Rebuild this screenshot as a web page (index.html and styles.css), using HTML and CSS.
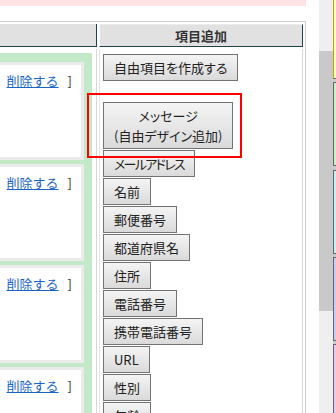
FILE: index.html
```html
<!DOCTYPE html>
<html lang="ja">
<head>
<meta charset="utf-8">
<title>項目追加</title>
<link rel="stylesheet" href="styles.css">
</head>
<body>
<div class="screen">
  <div class="frame">
    <div class="page">
      <div class="pinkbar"></div>
      <div class="table">
        <div class="th th-left"></div>
        <div class="th th-right">項目追加</div>
        <div class="td td-left">
          <div class="panel">
            <div class="item"><div class="del"><a href="#">削除する</a><span class="brk">]</span></div></div>
            <div class="item"><div class="del"><a href="#">削除する</a><span class="brk">]</span></div></div>
            <div class="item"><div class="del"><a href="#">削除する</a><span class="brk">]</span></div></div>
            <div class="item"><div class="del"><a href="#">削除する</a><span class="brk">]</span></div></div>
          </div>
        </div>
        <div class="td td-right">
          <div class="btns">
            <button class="btn btn-first" type="button">自由項目を作成する</button>
            <button class="btn" type="button">メッセージ<br>(自由デザイン追加)</button>
            <button class="btn btn-kana" type="button">メールアドレス</button>
            <button class="btn" type="button">名前</button>
            <button class="btn" type="button">郵便番号</button>
            <button class="btn" type="button">都道府県名</button>
            <button class="btn" type="button">住所</button>
            <button class="btn" type="button">電話番号</button>
            <button class="btn" type="button">携帯電話番号</button>
            <button class="btn" type="button">URL</button>
            <button class="btn" type="button">性別</button>
            <button class="btn" type="button">年齢</button>
          </div>
        </div>
      </div>
      <div class="highlight"></div>
    </div>
    <div class="scrollbar"><div class="thumb"></div></div>
  </div>
  <div class="side">
    <div class="sp sp-yellow"></div>
    <div class="sp sp-green"></div>
    <div class="sp sp-cyan"></div>
    <div class="sp sp-purple"></div>
    <div class="sp sp-pink"></div>
  </div>
</div>
</body>
</html>
```
FILE: styles.css
```css
html, body {
  margin: 0;
  padding: 0;
  background: #fff;
}
body {
  font-family: "Noto Sans CJK JP", "Noto Sans", sans-serif;
  font-size: 13px;
  color: #222;
  overflow: hidden;
}
.screen {
  display: flex;
  width: 336px;
  height: 413px;
  overflow: hidden;
}
.frame {
  display: flex;
  flex: none;
  width: 333px;
  height: 413px;
}
.page {
  position: relative;
  width: 319px;
  flex: none;
  height: 413px;
  overflow: hidden;
}
.pinkbar {
  width: 306px;
  height: 6px;
  background: #fde3e3;
}
.table {
  margin-top: 15px;
  width: 306px;
  box-sizing: border-box;
  border-top: 1px solid #cfcfcf;
  border-right: 1px solid #cfcfcf;
  padding: 2px 2px 0 0;
  display: grid;
  grid-template-columns: 97px 204px;
  column-gap: 2px;
  row-gap: 2px;
}
.th {
  height: 23px;
  box-sizing: border-box;
  background: #e1e1e1;
  border-right: 1px solid #1d434c;
  border-bottom: 1px solid #1d434c;
  font-weight: bold;
  line-height: 22px;
  text-align: center;
  color: #333;
  white-space: nowrap;
  overflow: hidden;
}
.th-right {
  border-left: 1px solid #fafafa;
  border-top: 1px solid #ececec;
  line-height: 21px;
}
.td-left {
  border-right: 1px solid #d6d6d6;
  padding: 4px 4px 0 0;
  height: 400px;
}
.panel {
  margin-left: -40px;
  background: #c3e9c9;
  padding: 9px 8px 0 8px;
}
.item {
  border: 3px solid #ebebeb;
  background: #fff;
  height: 91.7px;
  margin-bottom: 4px;
}
.del {
  padding: 6px 9px 0 0;
  line-height: 20px;
  text-align: right;
  color: #333;
  white-space: nowrap;
}
.del a {
  color: #1a64c8;
  text-decoration: underline;
}
.brk {
  margin-left: 9px;
}
.td-right {
  border-left: 1px solid #e4e4e4;
  border-right: 1px solid #d6d6d6;
  padding: 5px 0 0 3px;
  height: 400px;
}
.btns {
  display: flex;
  flex-direction: column;
  align-items: flex-start;
  gap: 1px;
}
.btn {
  font-family: "Noto Sans CJK JP", "Noto Sans", sans-serif;
  font-feature-settings: "palt";
  font-size: 13px;
  line-height: 20px;
  color: #222;
  padding: 2.5px 10px;
  margin: 0;
  border: 1px solid #737373;
  border-radius: 0;
  background: linear-gradient(#f4f4f4, #dadada);
  text-align: center;
  white-space: nowrap;
}
.btn-kana {
  letter-spacing: -1.7px;
}
.btn-first {
  margin-bottom: 20px;
}
.highlight {
  position: absolute;
  left: 87px;
  top: 93px;
  width: 155px;
  height: 65px;
  box-sizing: border-box;
  border: 2px solid #ff0000;
}
.scrollbar {
  width: 14px;
  flex: none;
  background: #efefef;
}
.thumb {
  margin-top: 51px;
  height: 260px;
  background: #c9c9c9;
}
.side {
  flex: none;
  width: 40px;
  background: #cbcbcb;
}
.sp {
  height: 84px;
  box-sizing: border-box;
  border: 1px solid #666;
  margin-bottom: 3.33px;
}
.sp-yellow {
  margin-top: -5px;
  background: #fdf8c0;
  border-left-color: #b8a800;
}
.sp-green {
  background: #c8f2c4;
}
.sp-cyan {
  background: #c6f2f6;
}
.sp-purple {
  background: #cccaf6;
}
.sp-pink {
  background: #f0c6f0;
}
```
